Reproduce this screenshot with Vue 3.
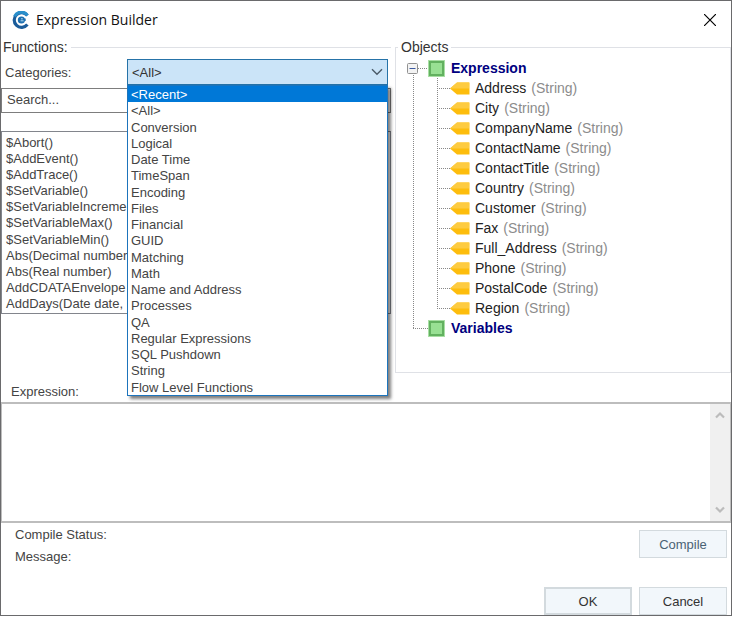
<script setup>
import { ref } from 'vue'

const categories = [
  '<Recent>', '<All>', 'Conversion', 'Logical', 'Date Time', 'TimeSpan', 'Encoding',
  'Files', 'Financial', 'GUID', 'Matching', 'Math', 'Name and Address', 'Processes',
  'QA', 'Regular Expressions', 'SQL Pushdown', 'String', 'Flow Level Functions'
]
const functions = [
  '$Abort()', '$AddEvent()', '$AddTrace()', '$SetVariable()', '$SetVariableIncreme',
  '$SetVariableMax()', '$SetVariableMin()', 'Abs(Decimal number', 'Abs(Real number)',
  'AddCDATAEnvelope', 'AddDays(Date date,'
]
const fields = [
  'Address', 'City', 'CompanyName', 'ContactName', 'ContactTitle', 'Country',
  'Customer', 'Fax', 'Full_Address', 'Phone', 'PostalCode', 'Region'
]
const category = ref('<All>')
const highlighted = ref('<Recent>')
const open = ref(true)
const expanded = ref(true)
const search = ref('')
const expression = ref('')

function choose(name) {
  category.value = name
  open.value = false
}
</script>

<template>
  <div class="window">
    <header class="titlebar">
      <svg class="logo" viewBox="0 0 18 18" aria-hidden="true">
        <path d="M15.4 4.4A7.4 7.4 0 1 0 15.4 13.6" fill="none" stroke="#1b5c9a" stroke-width="3.2" />
        <path d="M15.4 4.4A7.4 7.4 0 0 0 2.6 5.4" fill="none" stroke="#2a8fcb" stroke-width="3.2" />
        <circle cx="9.4" cy="9" r="3.6" fill="#1d6fb0" />
        <path d="M13 7.4V9.2H9.2" fill="none" stroke="#1d6fb0" stroke-width="1.4" />
        <path d="M8.6 9.8h3M9 7.8h1.8" stroke="#b5daf0" stroke-width="1" />
      </svg>
      <h1>Expression Builder</h1>
      <button class="close" type="button" aria-label="Close">
        <svg viewBox="0 0 12 12"><path d="M0 0L12 12M12 0L0 12" stroke="#000" stroke-width="1.2" /></svg>
      </button>
    </header>

    <main class="panes">
      <fieldset class="functions">
        <legend>Functions:</legend>
        <div class="category-row">
          <label for="category">Categories:</label>
          <div class="combo">
            <select id="category" v-model="category" @mousedown.prevent="open = !open">
              <option v-for="c in categories" :key="c">{{ c }}</option>
            </select>
            <svg class="chevron" viewBox="0 0 12 8" aria-hidden="true"><path d="M1 1.2L6 6.2L11 1.2" fill="none" stroke="#4a5a68" stroke-width="1.4" /></svg>
            <ul v-if="open" class="popup" role="listbox" aria-label="Categories">
              <li
                v-for="c in categories" :key="c" role="option"
                :aria-selected="c === highlighted" :class="{ active: c === highlighted }"
                @mouseenter="highlighted = c" @click="choose(c)"
              >{{ c }}</li>
            </ul>
          </div>
        </div>
        <input v-model="search" class="search" type="text" placeholder="Search..." aria-label="Search functions" />
        <ul class="function-list" aria-label="Functions">
          <li v-for="f in functions" :key="f">{{ f }}</li>
        </ul>
      </fieldset>

      <fieldset class="objects">
        <legend>Objects</legend>
        <ul class="tree">
          <li>
            <div class="node">
              <button class="expander" type="button" aria-label="Toggle Expression" @click="expanded = !expanded">
                <svg viewBox="0 0 11 11">
                  <rect x=".5" y=".5" width="10" height="10" rx="1" fill="#f3f3f3" stroke="#919191" />
                  <path d="M2.5 5.5h6" stroke="#3c5aa0" />
                </svg>
              </button>
              <span class="dots"></span>
              <span class="box"></span>
              <strong>Expression</strong>
            </div>
            <ul v-if="expanded" class="children">
              <li v-for="f in fields" :key="f" class="leaf">
                <span class="dots"></span>
                <svg class="tag" viewBox="0 0 20 13" aria-hidden="true">
                  <path d="M0 6.5L7 0.5H19V12.5H7Z" fill="#fdbd0c" />
                  <path d="M0 6.5L7 0.5H19V6.5Z" fill="#fdcb40" />
                  <path d="M19.5 .5V12.5" stroke="#fde08a" />
                </svg>
                <span class="name">{{ f }}</span>
                <span class="type">(String)</span>
              </li>
            </ul>
          </li>
          <li class="node last">
            <span class="dots"></span>
            <span class="box"></span>
            <strong>Variables</strong>
          </li>
        </ul>
      </fieldset>
    </main>

    <label class="expression-label" for="expression">Expression:</label>
    <div class="editor">
      <textarea id="expression" v-model="expression"></textarea>
      <div class="scrollbar" aria-hidden="true">
        <svg viewBox="0 0 10 8"><path d="M1 6.5L5 2.5L9 6.5" fill="none" stroke="#bcbcbc" stroke-width="2.2" /></svg>
        <svg viewBox="0 0 10 8"><path d="M1 1.5L5 5.5L9 1.5" fill="none" stroke="#bcbcbc" stroke-width="2.2" /></svg>
      </div>
    </div>

    <section class="status">
      <div class="messages">
        <p>Compile Status:</p>
        <p>Message:</p>
      </div>
      <button class="btn compile" type="button">Compile</button>
    </section>
    <footer class="actions">
      <button class="btn default" type="button">OK</button>
      <button class="btn" type="button">Cancel</button>
    </footer>
  </div>
</template>

<style>
body {
  margin: 0;
  background: #fff;
}
</style>

<style scoped>
* {
  box-sizing: border-box;
}
.window {
  border: 1px solid #6a6a6c;
  background: #fff;
  color: #444;
  font: 13px/16px "Liberation Sans", Arial, sans-serif;
}
ul {
  list-style: none;
  margin: 0;
  padding: 0;
}
button, input, select, textarea {
  font: inherit;
  color: inherit;
  border-radius: 0;
}
.titlebar {
  display: flex;
  align-items: center;
  height: 39px;
  padding: 0 15px 2px 11px;
}
.logo {
  width: 18px;
  height: 18px;
}
h1 {
  flex: 1;
  margin: 0 0 0 6px;
  color: #111;
  font: 14px/20px "Open Sans", sans-serif;
}
.close {
  width: 12px;
  height: 12px;
  padding: 0;
  border: 0;
  background: none;
}
.close svg, .expander svg {
  display: block;
}
.panes {
  display: grid;
  grid-template-columns: 390fr 336fr;
  gap: 4px;
}
fieldset {
  min-width: 0;
  margin: 0;
  padding: 0;
  border: 0 solid #dfe1e6;
}
legend {
  padding: 0 3px;
  font-size: 14px;
  line-height: 15px;
  color: #333;
}
.functions {
  border-top-width: 1px;
}
.functions legend {
  padding-left: 2px;
}
.category-row {
  display: flex;
  align-items: center;
  margin: 4px 3px 0 4px;
}
.category-row label {
  flex: 0 0 122px;
  padding-top: 2px;
}
.combo {
  position: relative;
  flex: 1;
}
.combo select {
  display: block;
  appearance: none;
  width: 100%;
  height: 26px;
  padding: 2px 4px 0;
  border: 1px solid #2673a8;
  background: #cbe4f8;
  color: #333;
}
.chevron {
  position: absolute;
  top: 9px;
  right: 5px;
  width: 12px;
  height: 8px;
}
.popup {
  position: absolute;
  z-index: 2;
  top: 100%;
  left: 0;
  right: 0;
  display: grid;
  grid-auto-rows: 1fr;
  height: 311px;
  border: 1px solid #1c74bc;
  background: #fff;
  box-shadow: 3px 3px 3px rgba(0, 0, 0, 0.5);
}
.popup li {
  padding: 1px 0 0 3px;
  line-height: 15px;
}
.popup .active {
  background: #0078d7;
  color: #fff;
}
.search {
  display: block;
  width: 100%;
  height: 25px;
  margin-top: 3px;
  padding: 0 5px 2px;
  border: 1px solid #7d7d7d;
  background: #fff;
}
.search::placeholder {
  color: #444;
  opacity: 1;
}
.function-list {
  display: grid;
  grid-auto-rows: 1fr;
  height: 183px;
  margin-top: 18px;
  padding: 3px 4px 1px;
  border: 1px solid #82858c;
  overflow: hidden;
  white-space: nowrap;
}
.objects {
  border-width: 1px;
}
.objects legend {
  margin-left: 2px;
}
.tree {
  padding: 3px 0 34px;
  font-size: 14px;
  background: repeating-linear-gradient(#888 0 1px, transparent 1px 2px) 17px 20px / 1px calc(100% - 64px) no-repeat;
}
.node, .leaf {
  display: flex;
  align-items: center;
  height: 20px;
}
.node {
  padding-left: 11px;
}
.last {
  padding-left: 17px;
}
.expander {
  width: 11px;
  height: 11px;
  padding: 0;
  border: 0;
  background: none;
}
.dots {
  width: 10px;
  height: 1px;
  background: repeating-linear-gradient(90deg, #888 0 1px, transparent 1px 2px);
}
.last .dots {
  width: 15px;
}
.box {
  width: 17px;
  height: 17px;
  border: 3px solid #62b15f;
  outline: 1px solid #a8dfa4;
  outline-offset: -1px;
  background: #98e093;
}
strong {
  margin-left: 6px;
  color: #000080;
}
.children {
  margin-left: 41px;
  background: repeating-linear-gradient(#888 0 1px, transparent 1px 2px) 0 0 / 1px calc(100% - 9px) no-repeat;
}
.leaf .dots {
  width: 13px;
}
.tag {
  width: 20px;
  height: 13px;
}
.name {
  margin: 0 5px;
  color: #222;
}
.type {
  color: #8c8c8c;
}
.expression-label {
  display: block;
  margin: 11px 0 2px 10px;
}
.editor {
  display: flex;
  height: 121px;
  border: 2px solid #bdbdbd;
  border-left-width: 1px;
  border-right-width: 1px;
}
.editor textarea {
  flex: 1;
  padding: 2px 4px;
  border: 0;
  outline: 0;
  resize: none;
}
.scrollbar {
  display: flex;
  flex-direction: column;
  justify-content: space-between;
  align-items: center;
  width: 20px;
  padding: 7px 0;
  background: #f0f0f0;
}
.scrollbar svg {
  width: 10px;
  height: 8px;
}
.status {
  display: flex;
  justify-content: space-between;
  align-items: flex-start;
  padding: 4px 4px 0 14px;
}
.messages p {
  margin: 0 0 6px;
}
.btn {
  width: 88px;
  height: 28px;
  padding: 1px 0 0;
  border: 1px solid #d3dade;
  background: #f2f7fb;
  color: #333;
}
.compile {
  margin-top: 3px;
  color: #4a6274;
}
.default {
  border-width: 2px;
}
.actions {
  display: flex;
  justify-content: flex-end;
  gap: 7px;
  padding: 16px 4px 0;
}
</style>
